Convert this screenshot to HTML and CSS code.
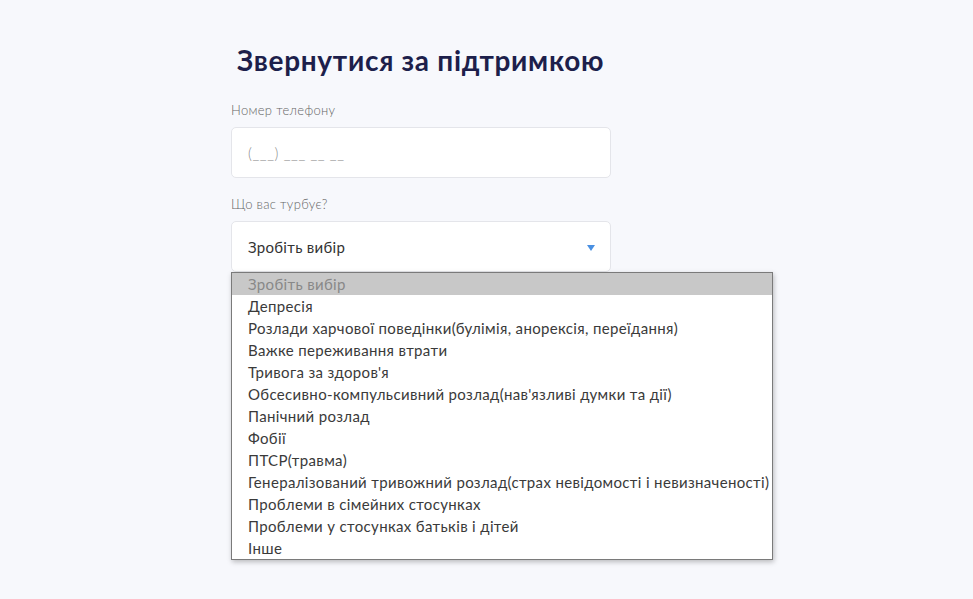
FILE: index.html
```html
<!DOCTYPE html>
<html lang="uk">
  <head>
    <meta charset="utf-8">
    <title>Звернутися за підтримкою</title>
    <link rel="stylesheet" href="styles.css">
  </head>
  <body>
    <div class="page">
      <form class="support-form">
        <h1 class="title">Звернутися за підтримкою</h1>

        <label class="label" for="phone">Номер телефону</label>
        <div class="field">
          <input id="phone" class="input" type="text" placeholder="(___) ___ __ __">
        </div>

        <label class="label" for="issue">Що вас турбує?</label>
        <div class="field select-wrap">
          <div id="issue" class="select">
            <span>Зробіть вибір</span>
            <span class="arrow"></span>
          </div>

          <!-- opened list of the select -->
          <ul class="options">
            <li class="option selected">Зробіть вибір</li>
            <li class="option">Депресія</li>
            <li class="option">Розлади харчової поведінки(булімія, анорексія, переїдання)</li>
            <li class="option">Важке переживання втрати</li>
            <li class="option">Тривога за здоров'я</li>
            <li class="option">Обсесивно-компульсивний розлад(нав'язливі думки та дії)</li>
            <li class="option">Панічний розлад</li>
            <li class="option">Фобії</li>
            <li class="option">ПТСР(травма)</li>
            <li class="option">Генералізований тривожний розлад(страх невідомості і невизначеності)</li>
            <li class="option">Проблеми в сімейних стосунках</li>
            <li class="option">Проблеми у стосунках батьків і дітей</li>
            <li class="option">Інше</li>
          </ul>
        </div>
      </form>
    </div>
  </body>
</html>
```

FILE: styles.css
```css
html, body {
  margin: 0;
  padding: 0;
}

body {
  background-color: #f7f8fc;
  font-family: Lato, "Noto Sans", sans-serif;
  color: #333;
  min-height: 599px;
}

.page {
  padding: 41px 0 0 231px;
}

.support-form {
  width: 380px;
  display: flex;
  flex-direction: column;
}

.title {
  margin: 0 0 22px 6px;
  font-size: 28px;
  font-weight: 700;
  color: #1d1f4b;
  line-height: 38px;
  letter-spacing: 0.7px;
  white-space: nowrap;
}

.label {
  font-size: 13px;
  font-weight: 300;
  color: #666;
  line-height: 18px;
  letter-spacing: 0.3px;
  margin-bottom: 8px;
}

.field {
  margin-bottom: 17px;
}

.input {
  box-sizing: border-box;
  width: 100%;
  height: 51px;
  border: 1px solid #e4e5ea;
  border-radius: 5px;
  background: #fff;
  padding: 0 16px;
  font-family: inherit;
  font-size: 15px;
  font-weight: 300;
  letter-spacing: 0.6px;
  color: #333;
  outline: none;
}

.input::placeholder {
  color: #888;
}

.select-wrap {
  position: relative;
}

.select {
  box-sizing: border-box;
  height: 51px;
  border: 1px solid #e4e5ea;
  border-radius: 5px;
  background: #fff;
  padding: 0 15px 0 16px;
  display: flex;
  align-items: center;
  justify-content: space-between;
  font-size: 15px;
  letter-spacing: 0.3px;
  color: #333;
}

.arrow {
  width: 0;
  height: 0;
  border-left: 4px solid transparent;
  border-right: 4px solid transparent;
  border-top: 6px solid #4a90e2;
  margin-top: 2px;
}

.options {
  position: absolute;
  top: 51px;
  left: 0;
  width: 542px;
  box-sizing: border-box;
  margin: 0;
  padding: 0;
  list-style: none;
  background: #fff;
  border: 1px solid #7a7a7a;
  box-shadow: 1px 2px 5px rgba(0, 0, 0, 0.25);
}

.option {
  height: 22px;
  line-height: 22px;
  padding-left: 16px;
  font-size: 15px;
  letter-spacing: 0.35px;
  color: #3a3a3a;
  white-space: nowrap;
}

.option.selected {
  background-color: #c8c8c8;
  color: #888;
}
```
